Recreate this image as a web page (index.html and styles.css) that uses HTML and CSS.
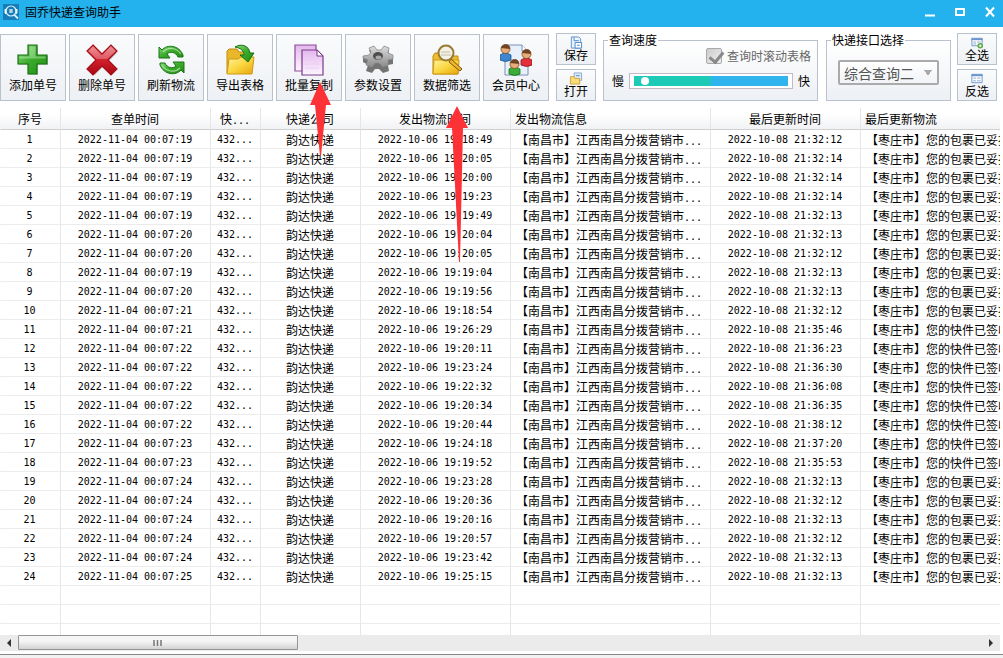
FILE: index.html
```
<!DOCTYPE html>
<html lang="zh-CN">
<head>
<meta charset="utf-8">
<title>固乔快递查询助手</title>
<link rel="stylesheet" href="styles.css">
</head>
<body>
<svg class="defs" aria-hidden="true">
  <defs>
    <linearGradient id="green" x1="0" y1="0" x2="1" y2="1"><stop offset="0" stop-color="#8ddb84"/><stop offset=".45" stop-color="#3fae2f"/><stop offset="1" stop-color="#1c8a10"/></linearGradient>
    <linearGradient id="red" x1="0" y1="0" x2="0" y2="1"><stop offset="0" stop-color="#e9747c"/><stop offset=".5" stop-color="#d3202c"/><stop offset="1" stop-color="#a80812"/></linearGradient>
    <linearGradient id="yellow" x1="0" y1="0" x2="1" y2="1"><stop offset="0" stop-color="#fff3a0"/><stop offset=".5" stop-color="#fbd640"/><stop offset="1" stop-color="#e5a40c"/></linearGradient>
    <linearGradient id="page" x1="0" y1="0" x2="0" y2="1"><stop offset="0" stop-color="#e3b7ec"/><stop offset="1" stop-color="#fdf6ff"/></linearGradient>
    <linearGradient id="steel" x1="0" y1="0" x2="0" y2="1"><stop offset="0" stop-color="#dcdcdc"/><stop offset="1" stop-color="#8b8b8b"/></linearGradient>
  </defs>
</svg>
<div class="app">
  <header class="titlebar">
    <svg class="logo" viewBox="0 0 16 16"><rect width="16" height="16" fill="#167db8"/><circle cx="8" cy="7" r="5" fill="none" stroke="#d9f2ff" stroke-width="1.2"/><path d="M11.5 11l3.5 3.5" stroke="#d9f2ff" stroke-width="1.8"/><path d="M1 6h3M1 8h3M2.500 5v5M6 6h4M6 8h4M8 5v4M12 6h3M12 8h3M13.500 5v5" stroke="#fff" stroke-width=".9"/></svg>
    <h1>固乔快递查询助手</h1>
    <button class="win" aria-label="最小化"><svg viewBox="0 0 12 12"><path d="M1 9.500h10" stroke="#fff" stroke-width="2"/></svg></button>
    <button class="win" aria-label="最大化"><svg viewBox="0 0 12 12"><path d="M2 3h8v6H2z" fill="none" stroke="#fff" stroke-width="2"/></svg></button>
    <button class="win" aria-label="关闭"><svg viewBox="0 0 12 12"><path d="M2 1.500l8 9M10 1.500l-8 9" stroke="#fff" stroke-width="2"/></svg></button>
  </header>

  <div class="toolbar">
    <button class="tool"><svg viewBox="0 0 32 32"><path d="M12 2h9v10h10v9H21v10h-9V21H2v-9h10z" fill="#aaa" opacity=".6"/><path d="M11 1h9v10h10v9H20v10h-9V20H1v-9h10z" fill="url(#green)" stroke="#176f10" stroke-width="1.200"/><path d="M12.500 2.500h6v10h10v2H2.500v-2h10z" fill="#d4f7ce" opacity=".4"/></svg>添加单号</button>
    <button class="tool"><svg viewBox="0 0 32 32"><path d="M9 3l8 8 8-8 6 6-8 8 8 8-6 6-8-8-8 8-6-6 8-8-8-8z" fill="#aaa" opacity=".6"/><path d="M7 1l9 9 9-9 6 6-9 9 9 9-6 6-9-9-9 9-6-6 9-9-9-9z" fill="url(#red)" stroke="#a2101a" stroke-width="1.200"/><path d="M7 2.500l9 9 9-9 4.500 4.500-8 8h-11L2.500 7z" fill="#fff" opacity=".24"/></svg>删除单号</button>
    <button class="tool"><svg viewBox="0 0 32 32"><g stroke="#187412" stroke-width="1" fill="url(#green)" stroke-linejoin="round"><path d="M4 3l3 3C12 0 24 1 28 11v2h-5C21 8 15 7 12 10l3 4H4z"/><path d="M29 29l-3-3c-5 6-17 5-21-5v-2h5c2 5 8 6 11 3l-3-4h11z"/></g><path d="M8 8C13 3 21 3 26 10M7 21c4 7 13 8 18 3" fill="none" stroke="#caf2c4" stroke-width="1.200" opacity=".7"/></svg>刷新物流</button>
    <button class="tool"><svg viewBox="0 0 32 32"><path d="M3 29V7l2-2h8l2 3h10l2 2v19z" fill="#eab72b" stroke="#c18a0a"/><path d="M3 30l2-15h9l3-2h13l-2 17z" fill="url(#yellow)" stroke="#cf9a12"/><path d="M11 3C18-1 25 2 26 9h4l-6 9-8-7h4C20 7 17 4 11 3z" fill="url(#green)" stroke="#17700f"/></svg>导出表格</button>
    <button class="tool"><svg viewBox="0 0 32 32"><path d="M2 1h21v26H2z" fill="url(#page)" stroke="#8d4a9c" stroke-width="1.200"/><path d="M9 6h15l6 6v19H9z" fill="url(#page)" stroke="#7a3a8a" stroke-width="1.200"/><path d="M24 6v6h6z" fill="#fff" stroke="#7a3a8a"/><path d="M12 16h14M12 20h14M12 24h14" stroke="#eccbf3"/></svg>批量复制</button>
    <button class="tool"><svg viewBox="0 0 32 32"><path d="M1 14h6l2-3-2-5 5-2 3 4h4l3-4 5 2-1 5 5 3v6l-5 1 1 6-6 2-4-4h-4l-3 4-6-2 2-6-5-3z" fill="#747474"/><path d="M1 12l6-1 2-3-2-4 5-2 3 4h4l3-4 5 2-1 5 5 2v4l-5 1v5l-5 2-4-4h-4l-3 4-6-2 2-5-5-2z" fill="url(#steel)" stroke="#8a8a8a" stroke-width=".8"/><ellipse cx="16" cy="12" rx="5" ry="4" fill="#4d4d4d"/><ellipse cx="16.500" cy="13.500" rx="3" ry="2" fill="#aaa"/></svg>参数设置</button>
    <button class="tool"><svg viewBox="0 0 32 32"><path d="M2 30V12l2-3h8l2 3h13v18z" fill="#edbd2e" stroke="#bf8b0d"/><path d="M2 30l1-14h25l-1 14z" fill="url(#yellow)" stroke="#cf9a12"/><path d="M20 15l11 10-2 2-11-9z" fill="#f3b52b" stroke="#765310"/><circle cx="15" cy="9" r="7.500" fill="#f4f1e5" stroke="#9a7b34" stroke-width="2"/><path d="M10 8h9M10 11h10" stroke="#c4bea9"/></svg>数据筛选</button>
    <button class="tool"><svg viewBox="0 0 32 32"><path d="M5 1h17l6 6v24H5z" fill="#e8f0fb" stroke="#7890b4"/><path d="M22 1v6h6" fill="#fff" stroke="#7890b4"/><g stroke-width=".8"><path d="M0 16v-5q5-4 11 0v5q-5 3-11 0z" fill="#4086ce" stroke="#1b558f"/><circle cx="5.500" cy="5" r="4.500" fill="#e8ad78" stroke="#79451e"/><path d="M21 21v-5q5-4 11 0v5q-5 3-11 0z" fill="#e3313b" stroke="#941018"/><circle cx="26.500" cy="10" r="4.500" fill="#e8ad78" stroke="#79451e"/><path d="M9 30v-5q5-4 11 0v5q-5 3-11 0z" fill="#3cad38" stroke="#15701a"/><circle cx="14.500" cy="20" r="4.500" fill="#e8ad78" stroke="#79451e"/></g><path d="M1 4q1-4 6-3.500 3 .5 3 4.500zM22 9q1-4 6-3.500 3 .5 3 4.500zM10 19q1-4 6-3.500 3 .5 3 4.500z" fill="#704322"/></svg>会员中心</button>

    <div class="stack">
      <button class="mini"><svg viewBox="0 0 14 14"><path d="M2 1h8l2 2v10H2z" fill="#e7f2fd" stroke="#5b93ca"/><path d="M5 1v4h5M6 7h7v6H6zM8 10h3" fill="#fff" stroke="#4685c5"/></svg>保存</button>
      <button class="mini"><svg viewBox="0 0 14 14"><path d="M5 1h8v8H5z" fill="#dceafa" stroke="#8aa7cc"/><path d="M7 4h4" stroke="#5a86be"/><path d="M1 5h4l1 2h5v6H1z" fill="#f9dc77" stroke="#d0a33b"/></svg>打开</button>
    </div>

    <fieldset class="group speed">
      <legend>查询速度</legend>
      <label class="check"><input type="checkbox" checked>查询时滚动表格</label>
      <div class="slider"><label for="speed">慢</label><input id="speed" type="range" min="0" max="100" value="5"><span>快</span></div>
    </fieldset>

    <fieldset class="group api">
      <legend>快递接口选择</legend>
      <select aria-label="快递接口选择"><option>综合查询二</option></select>
    </fieldset>

    <div class="stack">
      <button class="mini"><svg viewBox="0 0 14 14"><path d="M1.500 2.500h11v8h-11z" fill="#fff" stroke="#6a94cc"/><path d="M1 3.500h12" stroke="#6a94cc" stroke-width="2"/><path d="M3 6.500h3M3 8.500h3M7 6.500h4" stroke="#8da9cf"/><circle cx="10.500" cy="10.500" r="3" fill="#58ac42"/><path d="M9 10.500h3M10.500 9v3" stroke="#fff"/></svg>全选</button>
      <button class="mini"><svg viewBox="0 0 14 14"><path d="M1.500 2.500h11v9h-11z" fill="#fff" stroke="#6a94cc"/><path d="M1 3.500h12" stroke="#6a94cc" stroke-width="2"/><path d="M3 6.500h3M3 9.500h3M7 6.500h4M7 9.500h4" stroke="#8da9cf"/></svg>反选</button>
    </div>
  </div>

  <main class="grid">
    <table>
      <colgroup><col class="c-no"><col class="c-time"><col class="c-num"><col class="c-co"><col class="c-time"><col class="c-info"><col class="c-time"><col class="c-info"></colgroup>
      <thead><tr><th>序号</th><th>查单时间</th><th>快<span class="dots">...</span></th><th>快递公司</th><th>发出物流时间</th><th class="left">发出物流信息</th><th>最后更新时间</th><th class="left">最后更新物流</th></tr></thead>
      <tbody id="rows"></tbody>
    </table>
  </main>

  <div class="scroll">
    <button aria-label="向左滚动"><svg viewBox="0 0 8 8"><path d="M6 0v8L2 4z" fill="#333"/></svg></button>
    <div class="track"><div class="thumb"><svg viewBox="0 0 9 6"><path d="M1 0v6M4.500 0v6M8 0v6" stroke="#777" stroke-width="1.500"/></svg></div></div>
    <button aria-label="向右滚动"><svg viewBox="0 0 8 8"><path d="M2 0v8l4-4z" fill="#333"/></svg></button>
  </div>
  <footer class="status"></footer>

  <svg class="arrow first" viewBox="0 0 22 76"><path d="M10 0l11 23h-5l-5 51h-1l-5-51H0z" fill="#fc3236"/></svg>
  <svg class="arrow second" viewBox="0 0 22 156"><path d="M11 0l11 22h-5l-3 134h-1L6 22H0z" fill="#fc3236"/></svg>
</div>
<script src="rows.js"></script>
</body>
</html>
```
FILE: styles.css
```
* { box-sizing: border-box; }
body {
  margin: 0;
  font-family: "Noto Sans CJK SC", sans-serif;
  font-size: 12px;
  line-height: 16px;
  color: #000;
  background: #fff;
}
button, select, input { font: inherit; color: inherit; }
.defs { position: absolute; width: 0; height: 0; }
.app {
  position: relative;
  display: flex;
  flex-direction: column;
  height: 100vh;
  overflow: hidden;
}
.titlebar {
  flex: none;
  display: flex;
  align-items: center;
  gap: 18px;
  height: 27px;
  padding: 0 7px 3px 3px;
  background: #23b2ee;
}
.titlebar h1 {
  flex: 1;
  margin: 0 0 0 -12px;
  font-size: 12px;
  font-weight: 400;
}
.logo { width: 16px; height: 16px; }
.win {
  width: 12px;
  height: 12px;
  padding: 0;
  border: 0;
  background: none;
}
.win svg { display: block; width: 12px; height: 12px; }

.toolbar {
  flex: none;
  display: flex;
  align-items: flex-start;
  gap: 3px;
  height: 81px;
  padding: 7px 3px 0 0;
}
.tool, .mini {
  display: flex;
  flex: none;
  flex-direction: column;
  align-items: center;
  padding: 0;
  border: 1px solid #b9c1cc;
  background: linear-gradient(#fafbfc, #edf0f4);
  white-space: nowrap;
}
.tool { width: 66px; height: 67px; padding-top: 9px; gap: 1px; }
.tool svg { width: 32px; height: 32px; }
.stack {
  display: flex;
  flex: none;
  flex-direction: column;
  gap: 4px;
  margin: -1px 3px 0 4px;
}
.mini { width: 40px; height: 32px; padding-top: 2px; line-height: 12px; }
.mini svg { flex: none; width: 14px; height: 13px; }

.group {
  min-width: 0;
  height: 69px;
  margin: -2px 4px 0 1px;
  padding: 0;
  border: 1px solid #b9c1cc;
  background: linear-gradient(#fff, #edf0f4);
}
.group legend { margin-left: 4px; padding: 0 1px; line-height: 16px; }
.speed { flex: 1; }
.api { flex: none; width: 125px; margin-right: -1px; }
.check {
  display: flex;
  justify-content: flex-end;
  align-items: center;
  gap: 5px;
  padding-right: 6px;
  color: #666;
}
.check input {
  appearance: none;
  width: 16px;
  height: 16px;
  margin: 0;
  border: 1px solid #aaa;
  border-radius: 2px;
  background: linear-gradient(135deg, #ccc, #eee);
}
.check input::after {
  content: "";
  display: block;
  width: 6px;
  height: 11px;
  margin-left: 5px;
  border: solid #888;
  border-width: 0 3px 3px 0;
  transform: rotate(40deg);
}
.slider {
  display: flex;
  align-items: center;
  gap: 5px;
  padding: 9px 7px 0 8px;
}
.slider input {
  appearance: none;
  flex: 1;
  min-width: 0;
  height: 16px;
  margin: 0;
  padding: 2px 4px;
  border: 1px solid #c4b8c4;
  background: linear-gradient(90deg, #1dcab8 50%, #30b4ee 50%) content-box, #fff;
}
.slider input::-webkit-slider-thumb {
  appearance: none;
  width: 8px;
  height: 8px;
  border-radius: 50%;
  background: #fff;
}
.api select {
  appearance: none;
  display: block;
  width: 101px;
  height: 25px;
  margin: 12px auto 0;
  padding: 0 4px;
  border: 2px solid #aaa;
  border-radius: 2px;
  font-size: 14px;
  line-height: 20px;
  color: #555;
  background:
    linear-gradient(to bottom left, #aaa 50%, transparent 50%) right 9px top 8px / 4px 6px no-repeat,
    linear-gradient(to bottom right, #aaa 50%, transparent 50%) right 5px top 8px / 4px 6px no-repeat,
    linear-gradient(#fff, #f1f3f6);
}

.grid { flex: 1; min-height: 0; margin-right: 3px; overflow: hidden; }
table {
  width: 1060px;
  table-layout: fixed;
  border-collapse: separate;
  border-spacing: 0;
}
.c-no { width: 60px; }
.c-time { width: 150px; }
.c-num { width: 50px; }
.c-co { width: 100px; }
.c-info { width: 200px; }
th, td {
  overflow: hidden;
  padding: 0 1px 0 0;
  border-left: 1px solid #e6e6e6;
  font-weight: 400;
  text-align: center;
  white-space: nowrap;
}
th:first-child, td:first-child { border-left-color: transparent; }
th {
  height: 22px;
  border-bottom: 1px solid #d0d0d0;
  background: linear-gradient(#fff 30%, #f1f2f4);
}
td { height: 19px; padding-top: 2px; border-bottom: 1px solid #ececec; line-height: 16px; }
td.num, .dots { font-family: "DejaVu Sans Mono", monospace; font-size: 10px; }
.dots { line-height: 10px; }
td:first-child { padding-right: 2px; }
th.left { padding-left: 4px; text-align: left; }
td.left { padding-left: 5px; text-align: left; }

.scroll {
  flex: none;
  display: flex;
  height: 16px;
  padding-right: 3px;
  background: linear-gradient(#ebebeb, #ebebeb) content-box;
}
.scroll button {
  display: grid;
  place-items: center;
  width: 18px;
  padding: 0;
  border: 0;
  background: none;
}
.scroll button svg { width: 8px; height: 8px; }
.track { flex: 1; }
.thumb {
  display: grid;
  place-items: center;
  width: 29%;
  height: 15px;
  border: 1px solid #959595;
  border-radius: 1px;
  background: linear-gradient(#f5f5f5 40%, #d2d2d2);
}
.thumb svg { width: 9px; height: 6px; }
.status {
  flex: none;
  height: 7px;
  background: linear-gradient(#fff 3px, #888 3px, #888 4px, #f2f2f2 4px);
}

.arrow { position: absolute; pointer-events: none; }
.first { left: 310px; top: 82px; width: 22px; height: 76px; }
.second { left: 446px; top: 106px; width: 22px; height: 156px; }
```
FILE: rows.js
```
const data = [
  ["19", "19:18:49", "32:12", 0], ["19", "19:20:05", "32:14", 0], ["19", "19:20:00", "32:14", 0],
  ["19", "19:19:23", "32:14", 0], ["19", "19:19:49", "32:13", 0], ["20", "19:20:04", "32:13", 0],
  ["20", "19:20:05", "32:12", 0], ["19", "19:19:04", "32:13", 0], ["20", "19:19:56", "32:13", 0],
  ["21", "19:18:54", "32:12", 0], ["21", "19:26:29", "35:46", 1], ["22", "19:20:11", "36:23", 1],
  ["22", "19:23:24", "36:30", 1], ["22", "19:22:32", "36:08", 1], ["22", "19:20:34", "36:35", 1],
  ["22", "19:20:44", "38:12", 1], ["23", "19:24:18", "37:20", 1], ["23", "19:19:52", "35:53", 1],
  ["24", "19:23:28", "32:13", 0], ["24", "19:20:36", "32:12", 0], ["24", "19:20:16", "32:13", 0],
  ["24", "19:20:57", "32:12", 0], ["24", "19:23:42", "32:13", 0], ["25", "19:25:15", "32:13", 0]
];
const latest = ["【枣庄市】您的包裹已妥投", "【枣庄市】您的快件已签收"];
const rows = data.map(([s, sent, upd, kind], i) => `<tr>
  <td class="num">${i + 1}</td><td class="num">2022-11-04 00:07:${s}</td><td class="num">432...</td>
  <td>韵达快递</td><td class="num">2022-10-06 ${sent}</td>
  <td class="left">【南昌市】江西南昌分拨营销市<span class="dots">...</span></td>
  <td class="num">2022-10-08 21:${upd}</td><td class="left">${latest[kind]}</td></tr>`);
for (let i = 0; i < 3; i++) rows.push(`<tr>${"<td></td>".repeat(8)}</tr>`);
document.getElementById("rows").innerHTML = rows.join("");
```
